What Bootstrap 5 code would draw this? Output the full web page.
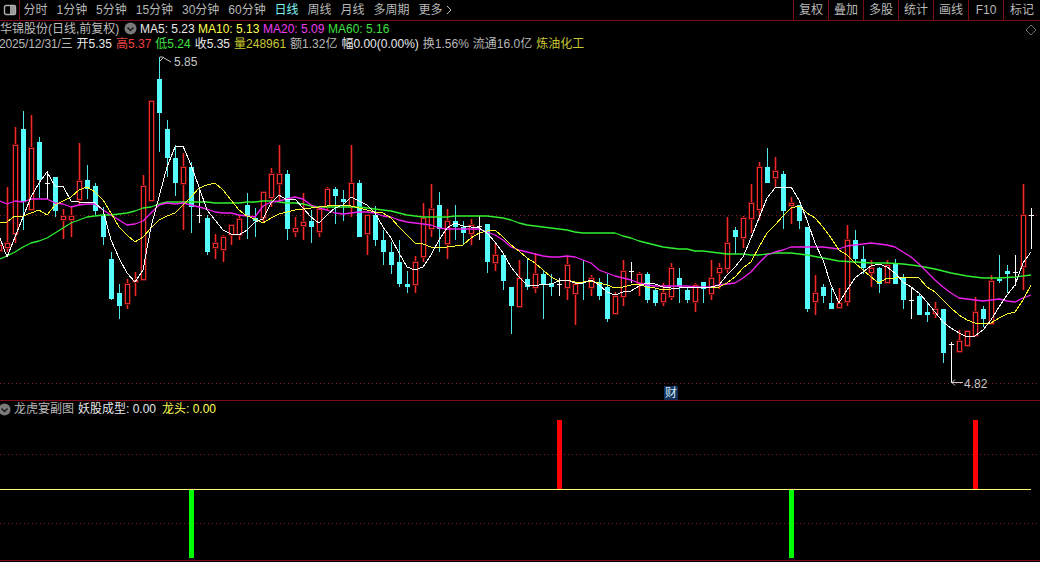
<!DOCTYPE html>
<html lang="zh-CN">
<head>
<meta charset="utf-8">
<title>华锦股份 日线</title>
<link href="https://cdn.jsdelivr.net/npm/bootstrap@5.3.0/dist/css/bootstrap.min.css" rel="stylesheet">
<style>
html,body{margin:0;height:100%;overflow:hidden;background:#000}
body{font:12px/15px "Liberation Sans","Noto Sans CJK SC",sans-serif;color:#c8c8c8;width:1040px;height:562px}
.kline-top{height:21px;border-bottom:1px solid #7d0c16;background:#000}
.kline-top .nav-link{padding:0;color:#b8b8b8;font-size:12px;line-height:20px;white-space:nowrap}
.kline-top .nav-link.active{color:#7ff5f5}
.side-toggle{width:20px;height:20px;border-right:1px solid #7d0c16}
.tab-gap{gap:8.95px;padding-left:3.5px}
.tool-btn{width:35px;height:20px;border:0;border-left:1px solid #7d0c16;border-radius:0;padding:0;font-size:12px;line-height:20px;color:#b8b8b8;background:none;text-align:center}
.tool-end{width:37px}
.main-pane{height:379px;overflow:hidden}
.sub-pane{height:161px;border-top:1px solid #7d0c16;border-bottom:1px solid #7d0c16;overflow:hidden}
.fill-svg{position:absolute;left:0;top:0;display:block}
.info-layer{z-index:2}
.info-row{height:15px;white-space:nowrap}
.info-head{margin-top:1px}
.info-gap{gap:4px;margin-left:-1px}
.date-cell{letter-spacing:-.15px}
.c-w{color:#e8e8e8}.c-g{color:#bdbdbd}.c-y{color:#ffff50}.c-m{color:#f03cf0}.c-l{color:#3fe03f}.c-r{color:#f04040}.c-o{color:#c8c832}
.c-v{color:#b8b8b8}
.ma-item{position:absolute;top:0}
.chev-dot{width:13px;height:13px;display:block}
.cai-tag{position:absolute;left:664px;top:365px;width:14px;height:14px;background:#123058;color:#cfe8ff;font-size:12px;line-height:14px;text-align:center;z-index:3}
.head-sub{height:16px;margin-top:1px;white-space:nowrap}
</style>
</head>
<body class="d-flex flex-column">
<header class="kline-top d-flex align-items-start">
  <div class="side-toggle d-flex align-items-center justify-content-center flex-shrink-0">
    <svg width="14" height="12" viewBox="0 0 14 12"><rect x="1.5" y="1.5" width="11" height="9" rx="1.5" fill="none" stroke="#b0b0b0" stroke-width="1.4"/><rect x="7" y="2" width="5" height="8" fill="#9a9a9a"/></svg>
  </div>
  <nav class="nav tab-gap flex-nowrap">
    <a class="nav-link" href="#">分时</a>
    <a class="nav-link" href="#">1分钟</a>
    <a class="nav-link" href="#">5分钟</a>
    <a class="nav-link" href="#">15分钟</a>
    <a class="nav-link" href="#">30分钟</a>
    <a class="nav-link" href="#">60分钟</a>
    <a class="nav-link active" href="#">日线</a>
    <a class="nav-link" href="#">周线</a>
    <a class="nav-link" href="#">月线</a>
    <a class="nav-link" href="#">多周期</a>
    <a class="nav-link d-flex align-items-center gap-1" href="#">更多<svg width="6" height="10" viewBox="0 0 6 10"><path d="M1 1l4 4-4 4" fill="none" stroke="#c0c0c0"/></svg></a>
  </nav>
  <div class="d-flex ms-auto">
    <button class="btn tool-btn">复权</button>
    <button class="btn tool-btn">叠加</button>
    <button class="btn tool-btn">多股</button>
    <button class="btn tool-btn">统计</button>
    <button class="btn tool-btn">画线</button>
    <button class="btn tool-btn">F10</button>
    <button class="btn tool-btn tool-end">标记</button>
  </div>
</header>

<section class="main-pane position-relative">
  <svg id="mainChart" class="fill-svg" width="1040" height="379" viewBox="0 21 1040 379"></svg>
  <div class="info-layer position-relative">
    <div class="info-row info-head position-relative">
      <span class="c-g">华锦股份(日线,前复权)</span>
      <svg class="chev-dot ma-item" style="left:124px" viewBox="0 0 13 13"><circle cx="6.5" cy="6.5" r="6" fill="#7a7a7a"/><path d="M3.5 5.5l3 3 3-3" fill="none" stroke="#1a1a1a" stroke-width="1.5"/></svg>
      <span class="ma-item c-w" style="left:140px">MA5: 5.23</span>
      <span class="ma-item c-y" style="left:198px">MA10: 5.13</span>
      <span class="ma-item c-m" style="left:263px">MA20: 5.09</span>
      <span class="ma-item c-l" style="left:328px">MA60: 5.16</span>
    </div>
    <div class="info-row d-flex info-gap">
      <span class="c-v date-cell">2025/12/31/三</span>
      <span class="c-w">开5.35</span>
      <span class="c-r">高5.37</span>
      <span class="c-l">低5.24</span>
      <span class="c-w">收5.35</span>
      <span class="c-o">量248961</span>
      <span class="c-v">额1.32亿</span>
      <span class="c-w">幅0.00(0.00%)</span>
      <span class="c-v">换1.56%</span>
      <span class="c-v">流通16.0亿</span>
      <span class="c-o">炼油化工</span>
    </div>
  </div>
  <div class="cai-tag">财</div>
</section>

<section class="sub-pane position-relative">
  <svg class="fill-svg" width="1040" height="160" viewBox="0 401 1040 160" shape-rendering="crispEdges">
    <line x1="0" x2="1040" y1="454.5" y2="454.5" stroke="#8a2020" stroke-dasharray="1 3"/>
    <line x1="0" x2="1040" y1="523.5" y2="523.5" stroke="#8a2020" stroke-dasharray="1 3"/>
    <rect x="557" y="420" width="5" height="69" fill="#ff0000"/>
    <rect x="973" y="420" width="5" height="69" fill="#ff0000"/>
    <rect x="189" y="490" width="5" height="68" fill="#00ff00"/>
    <rect x="789" y="490" width="5" height="68" fill="#00ff00"/>
    <line x1="0" x2="1031" y1="489.5" y2="489.5" stroke="#ffff70"/>
  </svg>
  <div class="head-sub position-relative d-flex">
    <svg class="chev-dot ma-item" style="left:-2px;top:1px" viewBox="0 0 13 13"><circle cx="6.5" cy="6.5" r="6" fill="#7a7a7a"/><path d="M3.5 5.5l3 3 3-3" fill="none" stroke="#1a1a1a" stroke-width="1.5"/></svg>
    <span class="ma-item c-v" style="left:14px">龙虎宴副图</span>
    <span class="ma-item c-w" style="left:78px">妖股成型: 0.00</span>
    <span class="ma-item c-y" style="left:162px">龙头: 0.00</span>
  </div>
</section>

<script>
// [high, low, bodyTop, bodyBottom, type]; candles sit on an 8px grid starting at x=-1
var K=[[240,252,245,250,'r'],[187,252,243,247,'r'],[127,243,145,233,'r'],[111,230,129,202,'c'],[115,211,148,209,'r'],[137,198,142,180,'c'],[171,199,183,183,'w'],[177,217,177,211,'c'],[209,239,216,219,'r'],[207,237,216,219,'r'],[143,205,181,199,'r'],[165,199,180,189,'c'],[183,215,186,211,'c'],[207,245,216,237,'c'],[252,300,259,299,'c'],[284,319,293,306,'c'],[279,309,284,303,'r'],[272,296,280,281,'r'],[175,279,186,279,'r'],[101,201,101,200,'r'],[57,152,79,113,'c'],[120,177,129,158,'c'],[145,196,158,183,'c'],[153,230,167,183,'r'],[162,233,167,207,'c'],[190,223,215,215,'w'],[215,255,218,252,'c'],[234,259,243,247,'r'],[235,262,237,249,'r'],[224,245,225,234,'r'],[215,240,219,234,'r'],[193,239,205,216,'c'],[208,237,218,221,'c'],[192,223,192,217,'r'],[168,207,174,197,'r'],[145,202,174,183,'r'],[170,240,174,229,'c'],[217,237,228,231,'r'],[193,240,222,225,'r'],[210,243,221,227,'c'],[208,237,209,231,'r'],[187,210,189,206,'r'],[187,224,189,196,'c'],[190,221,199,202,'c'],[145,217,183,206,'r'],[180,237,183,237,'c'],[215,255,215,233,'r'],[206,246,215,240,'c'],[230,265,240,252,'c'],[242,274,252,265,'c'],[240,287,262,284,'c'],[271,293,284,287,'c'],[256,293,262,284,'r'],[203,262,218,256,'r'],[184,237,209,228,'r'],[192,252,205,229,'c'],[209,259,221,243,'r'],[205,240,221,227,'c'],[221,245,227,233,'c'],[219,245,225,233,'r'],[216,240,226,226,'w'],[224,273,224,262,'c'],[243,271,255,262,'r'],[255,290,255,281,'c'],[287,334,287,306,'c'],[260,306,278,306,'r'],[258,290,279,287,'c'],[253,293,274,287,'r'],[271,319,274,284,'c'],[274,296,283,287,'c'],[278,296,284,284,'w'],[256,300,265,287,'r'],[284,325,284,293,'r'],[260,300,282,283,'c'],[275,296,278,287,'r'],[278,300,282,296,'c'],[274,322,287,319,'c'],[292,315,296,313,'r'],[260,306,271,296,'r'],[262,283,271,271,'w'],[272,296,274,283,'r'],[272,303,274,300,'c'],[288,306,290,303,'c'],[283,306,293,301,'r'],[263,300,268,296,'r'],[268,303,278,287,'c'],[287,303,290,300,'c'],[283,312,285,301,'r'],[282,303,282,289,'c'],[260,300,278,293,'r'],[263,289,268,272,'r'],[217,273,243,268,'r'],[227,254,230,237,'c'],[216,248,218,237,'r'],[184,233,203,218,'r'],[162,220,167,209,'r'],[148,182,167,183,'c'],[157,188,171,177,'r'],[171,229,174,211,'c'],[197,224,203,205,'r'],[205,229,205,221,'c'],[227,312,227,309,'c'],[275,315,293,301,'r'],[284,303,287,296,'c'],[288,309,303,309,'c'],[288,309,303,307,'r'],[225,306,240,301,'r'],[230,263,240,259,'c'],[246,274,259,268,'c'],[260,287,268,272,'r'],[267,293,268,284,'c'],[260,284,265,282,'r'],[259,284,263,284,'c'],[274,309,278,300,'c'],[287,319,300,300,'w'],[293,315,296,315,'c'],[303,322,312,315,'c'],[302,318,309,313,'r'],[309,363,309,353,'c'],[342,383,344,344,'w'],[330,351,341,351,'r'],[331,347,331,345,'r'],[297,335,312,335,'r'],[306,327,309,319,'c'],[275,324,281,323,'r'],[255,283,279,281,'c'],[265,293,271,274,'c'],[255,286,272,272,'w'],[184,290,215,266,'r'],[208,249,215,215,'w']];
// moving averages as x,y pairs
var MA={
w:[0,238,7,257,23,217,31,197,39,183,47,172,55,186,63,186,71,201,79,202,87,202,95,203,103,210,111,240,119,258,127,273,135,282,143,270,151,227,159,197,167,167,175,147,183,146,191,165,199,187,207,210,215,220,223,230,231,234,239,235,247,230,255,222,263,219,271,203,279,195,287,200,295,199,303,208,311,217,319,223,327,215,335,208,343,205,351,197,359,201,367,205,375,213,383,227,391,238,399,253,407,267,415,270,423,267,431,255,439,240,447,228,455,223,463,226,471,227,479,228,487,233,495,242,503,253,511,267,519,277,527,285,535,286,543,284,551,284,559,281,567,280,575,283,583,283,591,280,599,285,607,292,615,295,623,292,631,291,639,286,647,283,655,284,663,287,671,288,679,288,687,287,695,287,703,287,711,287,719,285,727,275,735,267,743,257,751,238,759,218,767,198,775,188,783,187,791,187,799,200,807,220,815,243,823,260,831,285,839,303,847,290,855,278,863,272,871,266,879,264,887,267,895,273,903,282,911,287,919,293,927,302,935,312,943,322,951,328,959,333,967,337,975,336,983,330,991,320,999,307,1007,295,1015,285,1023,263,1031,252],
y:[0,222,7,222,15,216,23,216,31,213,39,210,47,215,55,205,63,201,71,197,79,190,87,187,95,192,103,200,111,213,119,227,127,235,135,242,143,237,151,228,159,220,167,216,175,213,183,205,191,197,199,188,207,185,215,183,223,190,231,200,239,210,247,216,255,219,263,223,271,218,279,214,287,212,295,210,303,209,311,208,319,207,327,206,335,205,343,205,351,206,359,208,367,210,375,212,383,213,391,218,399,227,407,235,415,243,423,244,431,247,439,247,447,247,455,246,463,245,471,238,479,233,487,231,495,230,503,237,511,245,519,251,527,258,535,263,543,270,551,277,559,281,567,280,575,282,583,282,591,281,599,283,607,285,615,288,623,287,631,285,639,284,647,287,655,288,663,290,671,289,679,288,687,287,695,287,703,287,711,287,719,287,727,283,735,277,743,268,751,262,759,247,767,233,775,225,783,216,791,208,799,206,807,213,815,218,823,227,831,238,839,250,847,255,855,263,863,270,871,277,879,283,887,278,895,278,903,277,911,277,919,278,927,287,935,292,943,300,951,308,959,315,967,320,975,323,983,324,991,323,999,318,1007,314,1015,312,1023,300,1031,285],
m:[0,201,7,204,15,201,23,202,31,199,39,199,47,199,55,203,63,204,71,207,79,205,87,204,95,204,103,210,111,215,119,220,127,225,135,224,143,221,151,213,159,205,167,203,175,204,183,203,191,205,199,207,207,209,215,212,223,213,231,213,239,215,247,216,255,217,263,206,271,202,279,201,287,199,295,197,303,199,311,205,319,208,327,210,335,213,343,214,351,213,359,212,367,212,375,213,383,216,391,217,399,220,407,222,415,223,423,224,431,225,439,228,447,229,455,229,463,229,471,229,479,229,487,232,495,235,503,240,511,247,519,250,527,252,535,254,543,256,551,257,559,257,567,256,575,257,583,260,591,263,599,270,607,273,615,276,623,278,631,280,639,283,647,285,655,286,663,286,671,286,679,286,687,286,695,287,703,287,711,287,719,285,727,284,735,283,743,278,751,272,759,263,767,255,775,252,783,250,791,247,807,247,823,247,839,249,847,246,863,244,871,243,879,244,887,245,895,247,903,252,911,257,919,264,927,272,935,280,943,287,951,293,959,298,967,299,975,300,983,301,991,300,999,299,1007,301,1015,302,1023,298,1031,295],
g:[0,259,7,256,15,252,23,247,31,243,39,241,47,238,55,233,63,228,71,223,79,220,87,217,95,216,103,215,111,215,119,214,127,213,135,211,143,208,151,207,159,204,167,202,175,202,183,202,191,202,199,202,207,202,215,203,223,203,231,203,239,203,247,202,255,202,263,201,271,201,279,202,287,203,295,203,303,204,311,206,319,207,327,207,335,207,343,207,351,207,359,207,367,208,375,209,383,210,391,211,399,213,407,215,415,216,423,217,431,217,439,217,447,217,455,216,463,216,471,216,479,216,487,216,495,217,503,218,511,220,519,223,527,225,535,226,543,227,551,228,559,229,567,230,575,232,583,233,591,233,599,233,607,233,615,233,623,236,631,238,639,241,647,243,655,245,663,247,671,248,679,249,687,249,695,251,703,251,711,252,719,253,727,254,735,254,743,254,751,255,759,255,767,254,775,253,783,253,791,253,807,255,823,258,839,261,855,262,871,263,887,263,903,264,919,266,935,269,951,273,967,276,983,278,999,278,1015,277,1031,275]};
var COL={r:'#ee2a2a',c:'#55ffff',w:'#ffffff'};
var LINE={w:'#ffffff',y:'#ffff30',m:'#f020f0',g:'#30f030'};
var s='';
function dotted(y){return '<line x1="0" x2="1040" y1="'+y+'" y2="'+y+'" stroke="#8a2020" stroke-dasharray="1 3" shape-rendering="crispEdges"/>';}
s+=dotted(215.5)+dotted(383.5);
K.forEach(function(c,i){
  var x=-1+8*i,h=c[0],l=c[1],t=c[2],b=c[3],ty=c[4],col=COL[ty];
  s+='<g shape-rendering="crispEdges">';
  if(ty=='r'){s+='<line x1="'+(x+.5)+'" x2="'+(x+.5)+'" y1="'+h+'" y2="'+l+'" stroke="#4a0808" stroke-width="3"/>';}
  s+='<line x1="'+(x+.5)+'" x2="'+(x+.5)+'" y1="'+h+'" y2="'+l+'" stroke="'+(ty=='c'?'#4fe6e6':col)+'"/>';
  if(ty=='w'){s+='<line x1="'+(x-2)+'" x2="'+(x+3)+'" y1="'+(t+.5)+'" y2="'+(t+.5)+'" stroke="#fff"/>';}
  else if(ty=='c'){s+='<rect x="'+(x-2)+'" y="'+t+'" width="5" height="'+Math.max(b-t,1)+'" fill="'+col+'"/>';}
  else{
    s+='<rect x="'+(x-1.5)+'" y="'+(t+.5)+'" width="4" height="'+Math.max(b-t,1)+'" fill="#000" stroke="#4a0808" stroke-width="3"/>';
    s+='<rect x="'+(x-1.5)+'" y="'+(t+.5)+'" width="4" height="'+Math.max(b-t,1)+'" fill="#000" stroke="'+col+'"/>';
  }
  s+='</g>';
});
[['g',1.3,'auto'],['m',1.3,'auto'],['y',1,'crispEdges'],['w',1,'crispEdges']].forEach(function(a){
  s+='<polyline points="'+MA[a[0]].join(' ')+'" fill="none" stroke="'+LINE[a[0]]+'" stroke-width="'+a[1]+'" stroke-linejoin="round" shape-rendering="'+a[2]+'"/>';
});
s+='<path d="M160 61l4-4M160 57h3M164 58l7 4" fill="none" stroke="#c8c8c8"/>';
s+='<text x="174" y="66" font-family="Liberation Sans" font-size="12" fill="#c8c8c8">5.85</text>';
s+='<path d="M952 382.5h11M952 382.5l3-3M952 382.5l3 3" fill="none" stroke="#c8c8c8"/>';
s+='<text x="964" y="388" font-family="Liberation Sans" font-size="12" fill="#c8c8c8">4.82</text>';
s+='<path d="M1031 25l5 5-5 5-5-5z" fill="none" stroke="#6a6a6a"/>';
document.getElementById('mainChart').innerHTML=s;
</script>
<script src="https://cdn.jsdelivr.net/npm/bootstrap@5.3.0/dist/js/bootstrap.bundle.min.js"></script>
</body>
</html>
